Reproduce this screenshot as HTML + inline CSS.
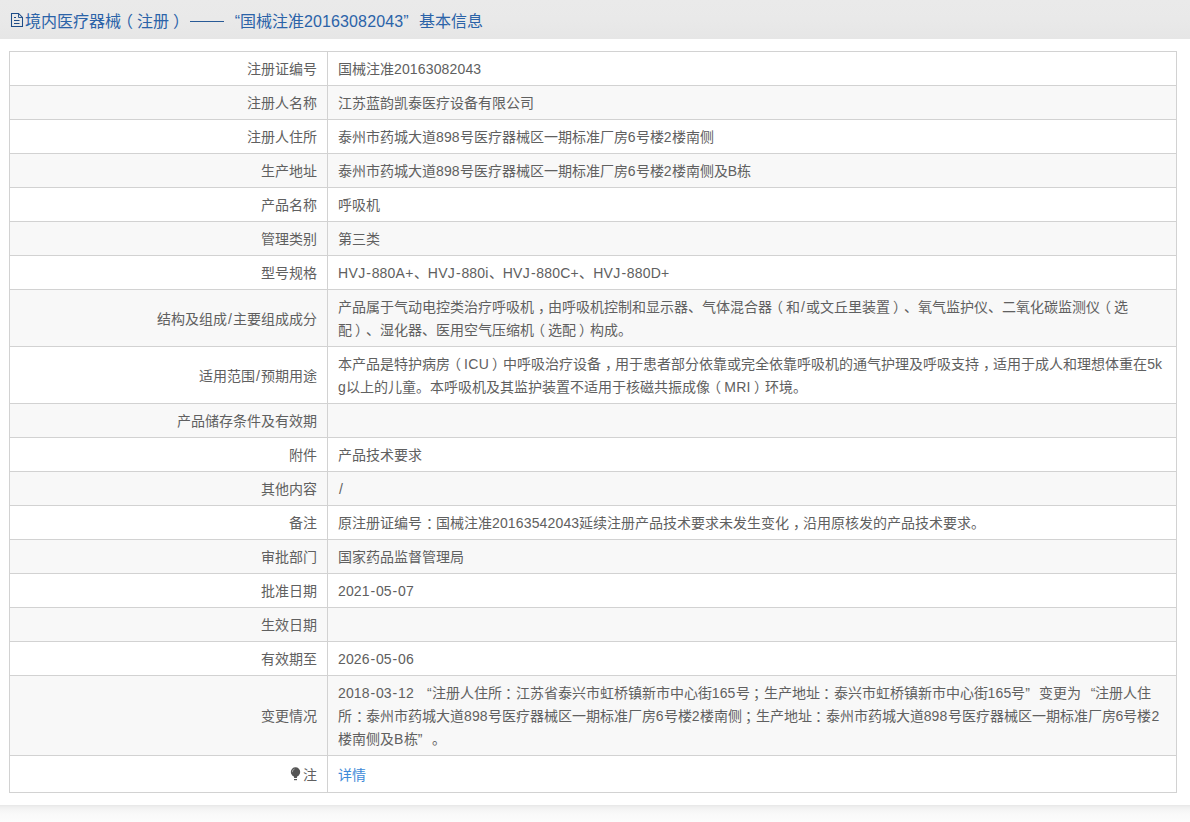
<!DOCTYPE html>
<html lang="zh-CN"><head><meta charset="utf-8">
<style>
html,body{margin:0;padding:0;}
body{width:1190px;height:822px;overflow:hidden;background:#fff;font-family:"Liberation Sans",sans-serif;position:relative;text-spacing-trim:space-all;font-kerning:none;}
.hd{position:absolute;left:0;top:0;width:1190px;height:39px;background:linear-gradient(#eaeaea,#e9e9e9 50%,#e6e6e6);}
.hd .ic{position:absolute;left:10px;top:12px;}
.hd .t{position:absolute;left:25px;top:10.5px;font-size:16px;line-height:22px;color:#2b63a8;white-space:nowrap;}
.tc{display:inline-block;}
.dash{display:inline-block;width:34px;height:0;border-top:1.5px solid #285a96;margin:0 0 0 5px;vertical-align:middle;position:relative;top:-1px;}
.tq1,.tq2{display:inline-block;width:16px;}
.tq1{text-align:right;}
.td{display:inline-block;letter-spacing:0.12px;}
.shadow{position:absolute;left:0;top:805px;width:1190px;height:17px;background:linear-gradient(#e7e7e7,#efefef 2px,#f5f5f5 5px,#f9f9f9 9px,#fcfcfc 17px);}
table{position:absolute;left:9px;top:51px;width:1168px;border-collapse:collapse;table-layout:fixed;font-size:14px;color:#606060;}
td{border:1px solid #d2d2d2;padding:6px 10px 4px;line-height:23px;white-space:nowrap;overflow:hidden;}
td.l{text-align:right;vertical-align:middle;width:297px;}
td.r{vertical-align:top;}
tr.g td{background:#f8f8f8;}
tr.s td{height:23px;}
tr.last td{height:26px;}
.lq,.rq{display:inline-block;width:14px;}
.lq{text-align:right;}
.hy{margin:0 0.75px;}
.la{letter-spacing:0.35px;}
.bulb{vertical-align:0;position:relative;top:1px;margin-right:2px;}
a{color:#3d8ad8;text-decoration:none;}
.dg{letter-spacing:0.15px;}
.sl{margin:0 1px;}
.cp{position:relative;left:3.5px;}
.lp{position:relative;left:-3px;}
.rp{position:relative;left:3px;}
.lp2{position:relative;left:-4.5px;}
.rp2{position:relative;left:4px;}
tr.last td{padding-top:7px;padding-bottom:3px;}
tr.last td.r{padding-top:8px;padding-bottom:2px;}
tr.last td.l{padding-top:6px;padding-bottom:4px;}

</style></head><body>
<div class="hd">
<svg class="ic" width="14" height="16" viewBox="0 0 14 16"><path d="M1.5 1.5H8.5L12.5 5.5V14.5H1.5Z" fill="none" stroke="#1d4c88" stroke-width="1.05" stroke-linejoin="miter"/><path d="M8.5 1.5V5.5H12.5" fill="none" stroke="#1d4c88" stroke-width="0.9"/><path d="M4 5.5H6M4 8.5H9.5M4 11.5H9.5" stroke="#1d4c88" stroke-width="1"/></svg>
<div class="t"><span class="tc">境内医疗器械<span class="lp2">（</span>注册<span class="rp2">）</span></span><span class="dash"></span><span class="tq1">“</span><span class="tc">国械注准</span><span class="td">20163082043</span><span class="tq2">”</span><span class="tc">基本信息</span></div>
</div>
<div class="shadow"></div>
<table>
<tr class="s"><td class="l">注册证编号</td><td class="r">国械注准<span class="dg">20163082043</span></td></tr>
<tr class="g s"><td class="l">注册人名称</td><td class="r">江苏蓝韵凯泰医疗设备有限公司</td></tr>
<tr class="s"><td class="l">注册人住所</td><td class="r">泰州市药城大道<span class="dg">898</span>号医疗器械区一期标准厂房<span class="dg">6</span>号楼<span class="dg">2</span>楼南侧</td></tr>
<tr class="g s"><td class="l">生产地址</td><td class="r">泰州市药城大道<span class="dg">898</span>号医疗器械区一期标准厂房<span class="dg">6</span>号楼<span class="dg">2</span>楼南侧及<span class="la">B</span>栋</td></tr>
<tr class="s"><td class="l">产品名称</td><td class="r">呼吸机</td></tr>
<tr class="g s"><td class="l">管理类别</td><td class="r">第三类</td></tr>
<tr class="s"><td class="l">型号规格</td><td class="r"><span class="la">HVJ</span><span class="hy">-</span><span class="dg">880</span><span class="la">A+</span>、<span class="la">HVJ</span><span class="hy">-</span><span class="dg">880</span><span class="la">i</span>、<span class="la">HVJ</span><span class="hy">-</span><span class="dg">880</span><span class="la">C+</span>、<span class="la">HVJ</span><span class="hy">-</span><span class="dg">880</span><span class="la">D+</span></td></tr>
<tr class="g"><td class="l">结构及组成<span class="sl">/</span>主要组成成分</td><td class="r">产品属于气动电控类治疗呼吸机<span class="cp">，</span>由呼吸机控制和显示器、气体混合器<span class="lp">（</span>和<span class="sl">/</span>或文丘里装置<span class="rp">）</span>、氧气监护仪、二氧化碳监测仪<span class="lp">（</span>选<br>配<span class="rp">）</span>、湿化器、医用空气压缩机<span class="lp">（</span>选配<span class="rp">）</span>构成。</td></tr>
<tr class=""><td class="l">适用范围<span class="sl">/</span>预期用途</td><td class="r">本产品是特护病房<span class="lp">（</span><span class="la">ICU</span><span class="rp">）</span>中呼吸治疗设备<span class="cp">，</span>用于患者部分依靠或完全依靠呼吸机的通气护理及呼吸支持<span class="cp">，</span>适用于成人和理想体重在<span class="dg">5</span><span class="la">k</span><br><span class="la">g</span>以上的儿童。本呼吸机及其监护装置不适用于核磁共振成像<span class="lp">（</span><span class="la">MRI</span><span class="rp">）</span>环境。</td></tr>
<tr class="g s"><td class="l">产品储存条件及有效期</td><td class="r"></td></tr>
<tr class="s"><td class="l">附件</td><td class="r">产品技术要求</td></tr>
<tr class="g s"><td class="l">其他内容</td><td class="r"><span class="sl">/</span></td></tr>
<tr class="s"><td class="l">备注</td><td class="r">原注册证编号<span class="cp">：</span>国械注准<span class="dg">20163542043</span>延续注册产品技术要求未发生变化<span class="cp">，</span>沿用原核发的产品技术要求。</td></tr>
<tr class="g s"><td class="l">审批部门</td><td class="r">国家药品监督管理局</td></tr>
<tr class="s"><td class="l">批准日期</td><td class="r"><span class="dg">2021</span><span class="hy">-</span><span class="dg">05</span><span class="hy">-</span><span class="dg">07</span></td></tr>
<tr class="g s"><td class="l">生效日期</td><td class="r"></td></tr>
<tr class="s"><td class="l">有效期至</td><td class="r"><span class="dg">2026</span><span class="hy">-</span><span class="dg">05</span><span class="hy">-</span><span class="dg">06</span></td></tr>
<tr class="g"><td class="l">变更情况</td><td class="r"><span class="dg">2018</span><span class="hy">-</span><span class="dg">03</span><span class="hy">-</span><span class="dg">12</span> <span class="lq">“</span>注册人住所<span class="cp">：</span>江苏省泰兴市虹桥镇新市中心街<span class="dg">165</span>号<span class="cp">；</span>生产地址<span class="cp">：</span>泰兴市虹桥镇新市中心街<span class="dg">165</span>号<span class="rq">”</span>变更为<span class="lq">“</span>注册人住<br>所<span class="cp">：</span>泰州市药城大道<span class="dg">898</span>号医疗器械区一期标准厂房<span class="dg">6</span>号楼<span class="dg">2</span>楼南侧<span class="cp">；</span>生产地址<span class="cp">：</span>泰州市药城大道<span class="dg">898</span>号医疗器械区一期标准厂房<span class="dg">6</span>号楼<span class="dg">2</span><br>楼南侧及<span class="la">B</span>栋<span class="rq">”</span>。</td></tr>
<tr class="last"><td class="l"><svg class="bulb" width="11" height="14" viewBox="0 0 11 14"><circle cx="5.5" cy="5" r="4.7" fill="#555"/><path d="M2.3 5.2A3.2 3.2 0 0 1 4.6 2" fill="none" stroke="#aaa" stroke-width="0.9"/><path d="M3.5 8.5L4.2 11H6.8L7.5 8.5Z" fill="#555"/><rect x="4" y="12" width="3" height="1.2" fill="#555"/></svg>注</td><td class="r"><a>详情</a></td></tr>
</table>
</body></html>
